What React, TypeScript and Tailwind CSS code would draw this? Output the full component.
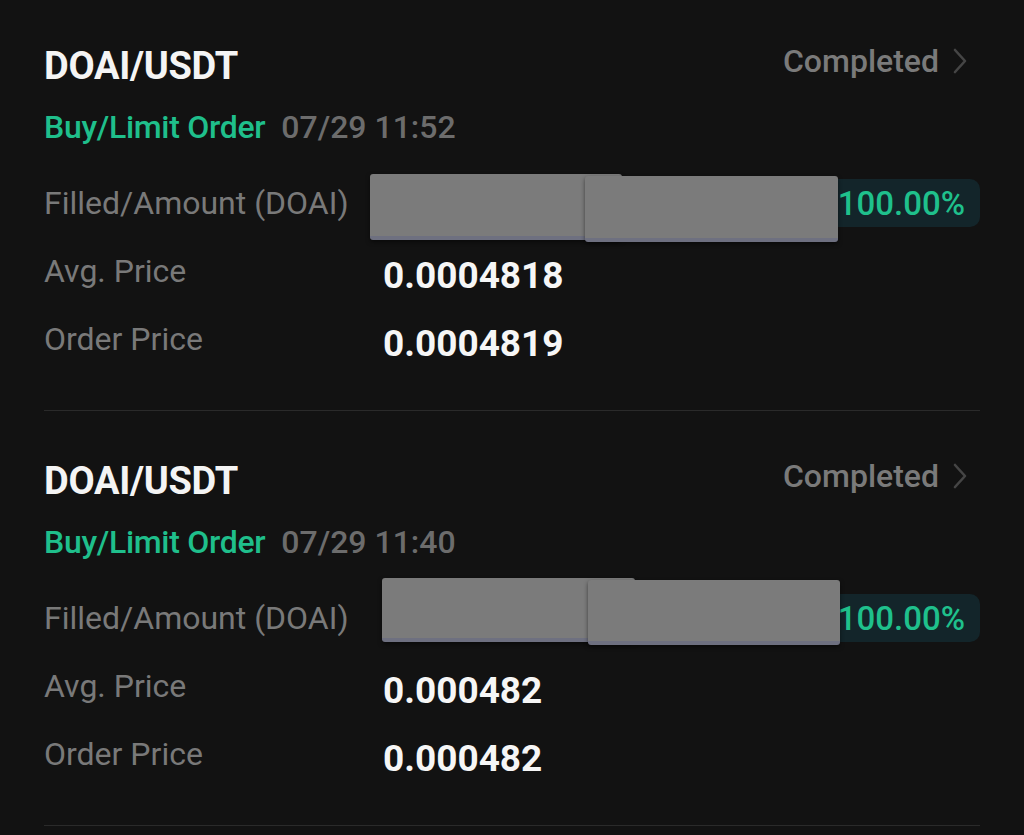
import React from 'react';

interface Order {
  pair: string;
  side: string;
  time: string;
  avg: string;
  price: string;
  // redaction blocks laid over the filled/amount bar
  masks: { left: number; top: number; width: number; height: number }[];
}

const orders: Order[] = [
  {
    pair: 'DOAI/USDT',
    side: 'Buy/Limit Order',
    time: '07/29 11:52',
    avg: '0.0004818',
    price: '0.0004819',
    masks: [
      { left: 326, top: 5, width: 252, height: 66 },
      { left: 541, top: 7, width: 253, height: 66 },
    ],
  },
  {
    pair: 'DOAI/USDT',
    side: 'Buy/Limit Order',
    time: '07/29 11:40',
    avg: '0.000482',
    price: '0.000482',
    masks: [
      { left: 338, top: -6, width: 253, height: 64 },
      { left: 544, top: -4, width: 252, height: 65 },
    ],
  },
];

function Chevron() {
  return (
    <svg width="18" height="30" viewBox="0 0 18 30" fill="none" className="ml-[12px]">
      <path d="M4 4 L14 15 L4 26" stroke="#454545" strokeWidth="2.6" strokeLinecap="round" strokeLinejoin="round" />
    </svg>
  );
}

function OrderCard({ order }: { order: Order }) {
  return (
    <div className="pt-[48px] first:pt-[44px]">
      {/* header */}
      <div className="flex h-[44px] items-center justify-between">
        <span className="text-[38px] font-bold tracking-[-0.3px] text-[#f4f4f4]">{order.pair}</span>
        <div className="mr-[11px] -mt-[10px] flex items-center">
          <span className="text-[32px] font-medium text-[#7a7a7a]">Completed</span>
          <Chevron />
        </div>
      </div>

      <div className="mt-[19px] flex h-[40px] items-center gap-[16px] text-[32px] font-medium">
        <span className="tracking-[-0.3px] text-[#1fbf8b]">{order.side}</span>
        <span className="text-[#6c6c6c]">{order.time}</span>
      </div>

      {/* detail rows */}
      <div className="mt-[22px]">
        <div className="relative flex h-[68px] items-center">
          <span className="w-[339px] shrink-0 text-[32px] text-[#797979]">Filled/Amount (DOAI)</span>
          <div className="flex h-[48px] flex-1 items-center justify-end rounded-[10px] bg-[#13252a] pr-[15px]">
            <span className="text-[33px] font-medium text-[#1fc08c]">100.00%</span>
          </div>
          {order.masks.map((m, i) => (
            <div
              key={i}
              className="absolute rounded-[3px] border-b-[4px] border-[#6e7080] bg-[#7b7b7b] shadow-[0_2px_4px_rgba(0,0,0,0.5)]"
              style={{ left: m.left, top: m.top, width: m.width, height: m.height }}
            />
          ))}
        </div>
        <div className="flex h-[68px] items-center">
          <span className="w-[339px] shrink-0 text-[32px] text-[#797979]">Avg. Price</span>
          <span className="mt-[8px] text-[37px] font-bold text-[#f6f6f6]">{order.avg}</span>
        </div>
        <div className="flex h-[68px] items-center">
          <span className="w-[339px] shrink-0 text-[32px] text-[#797979]">Order Price</span>
          <span className="mt-[8px] text-[37px] font-bold text-[#f6f6f6]">{order.price}</span>
        </div>
      </div>

      <div className="mt-[37px] h-px bg-[#2a2a2a]" />
    </div>
  );
}

export default function App() {
  return (
    <div className="min-h-[835px] w-[1024px] overflow-hidden bg-[#121212] px-[44px] font-['Roboto',sans-serif] leading-none">
      {orders.map((o, i) => (
        <OrderCard key={i} order={o} />
      ))}
    </div>
  );
}
